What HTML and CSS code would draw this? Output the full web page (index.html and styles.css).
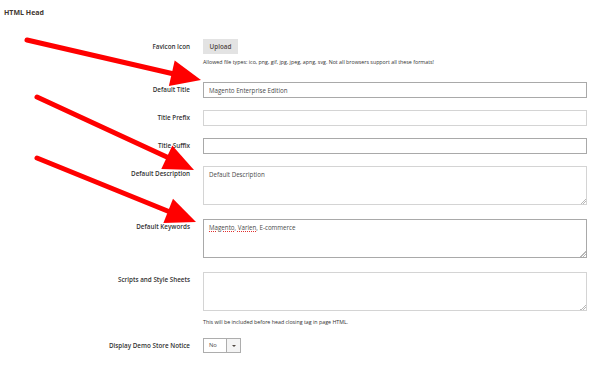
FILE: index.html
```html
<!DOCTYPE html>
<html lang="en">
<head>
    <meta charset="UTF-8">
    <title>HTML Head</title>
    <link rel="stylesheet" href="styles.css">
</head>
<body>

    <div class="page">
        <h2 class="section-title">HTML Head</h2>

        <div class="form">
            <div class="field field-favicon">
                <label class="field-label">Favicon Icon</label>
                <div class="field-control">
                    <button type="button" class="btn-upload">Upload</button>
                </div>
            </div>
            <div class="field-note note-favicon">
                <span></span>
                <p>Allowed file types: ico, png, gif, jpg, jpeg, apng, svg. Not all browsers support all these formats!</p>
            </div>

            <div class="field">
                <label class="field-label" for="default-title">Default Title</label>
                <div class="field-control">
                    <input type="text" id="default-title" class="input dark" value="Magento Enterprise Edition">
                </div>
            </div>
            <div class="field">
                <label class="field-label" for="title-prefix">Title Prefix</label>
                <div class="field-control">
                    <input type="text" id="title-prefix" class="input light">
                </div>
            </div>
            <div class="field">
                <label class="field-label" for="title-suffix">Title Suffix</label>
                <div class="field-control">
                    <input type="text" id="title-suffix" class="input dark">
                </div>
            </div>
            <div class="field field-area">
                <label class="field-label" for="default-description">Default Description</label>
                <div class="field-control">
                    <textarea id="default-description" class="area light">Default Description</textarea>
                </div>
            </div>
            <div class="field field-area">
                <label class="field-label">Default Keywords</label>
                <div class="field-control">
                    <div class="area dark"><span class="typo">Magento</span>, <span class="typo">Varien</span>, E-commerce</div>
                </div>
            </div>
            <div class="field field-area field-scripts">
                <label class="field-label" for="scripts">Scripts and Style Sheets</label>
                <div class="field-control">
                    <textarea id="scripts" class="area light"></textarea>
                </div>
            </div>
            <div class="field-note note-scripts">
                <span></span>
                <p>This will be included before head closing tag in page HTML.</p>
            </div>
            <div class="field">
                <label class="field-label">Display Demo Store Notice</label>
                <div class="field-control">
                    <div class="select">
                        <span class="select-value">No</span>
                        <span class="select-arrow"></span>
                    </div>
                </div>
            </div>
        </div>
    </div>

    <svg class="arrows" width="603" height="366" viewBox="0 0 603 366">
        <g stroke="#ff0000" stroke-width="5" stroke-linecap="round" fill="none">
            <line x1="27" y1="40" x2="174" y2="74"/>
            <line x1="37" y1="97" x2="169" y2="158"/>
            <line x1="37" y1="158" x2="170" y2="212"/>
        </g>
        <g fill="#ff0000">
            <polygon points="201,80 168.9,86 174.7,60.6"/>
            <polygon points="194,170 161.3,169.1 172.3,145.5"/>
            <polygon points="196,222 163.4,222.9 173,198.7"/>
        </g>
    </svg>

</body>
</html>
```

FILE: styles.css
```css
* {
    box-sizing: border-box;
}
body {
    margin: 0;
    background: #ffffff;
    font-family: "Open Sans", "Noto Sans", Arial, sans-serif;
    color: #303030;
}
.page {
    position: relative;
    padding: 9px 4px 0;
}
.section-title {
    margin: 0;
    font-size: 7px;
    line-height: 8px;
    font-weight: 700;
    color: #41362f;
}
.form {
    margin-top: 22px;
}
.field {
    display: grid;
    grid-template-columns: 186px 384px;
    column-gap: 13px;
    align-items: center;
    margin-bottom: 12px;
}
.field-label {
    text-align: right;
    font-size: 6.3px;
    line-height: 8px;
    font-weight: 600;
    color: #333333;
}
.field-area {
    align-items: start;
    margin-bottom: 14px;
}
.field-area .field-label {
    padding-top: 4px;
}
.field-favicon {
    margin-bottom: 0;
}
.btn-upload {
    display: block;
    width: 35px;
    height: 15px;
    padding: 0;
    border: 0;
    background: #e3e3e3;
    font-family: inherit;
    font-size: 6.3px;
    font-weight: 600;
    color: #514943;
}
.field-note {
    display: grid;
    grid-template-columns: 186px 384px;
    column-gap: 13px;
}
.field-note p {
    margin: 0;
    font-size: 5.3px;
    line-height: 6px;
    color: #303030;
    white-space: nowrap;
}
.note-favicon {
    margin-top: 5px;
    margin-bottom: 17px;
}
.field-scripts {
    margin-bottom: 8px;
}
.note-scripts {
    margin-bottom: 13px;
}
.input {
    display: block;
    width: 384px;
    height: 16px;
    padding: 0 5px;
    border: 1px solid #adadad;
    font-family: inherit;
    font-size: 6.2px;
    color: #4a4a4a;
    outline: none;
}
.area {
    display: block;
    width: 384px;
    height: 39px;
    padding: 4px 5px;
    border: 1px solid #adadad;
    font-family: inherit;
    font-size: 6.2px;
    line-height: 8px;
    color: #4a4a4a;
    resize: both;
    overflow: auto;
    outline: none;
}
.area::-webkit-resizer {
    background: linear-gradient(135deg, transparent 80%, #b8b8b8 80%, #b8b8b8 84%, transparent 84%, transparent 89%, #b8b8b8 89%, #b8b8b8 93%, transparent 93%);
}
.dark {
    border-color: #a9a9a9;
}
.light {
    border-color: #d4d4d4;
}
.typo {
    text-decoration: underline dotted #e03030;
    text-decoration-thickness: 1px;
    text-underline-offset: 1px;
}
.select {
    display: flex;
    width: 38px;
    height: 15px;
    border: 1px solid #adadad;
    font-size: 5.8px;
    color: #4a4a4a;
}
.select-value {
    width: 23px;
    padding-left: 5px;
    line-height: 13px;
    border-right: 1px solid #adadad;
}
.select-arrow {
    flex: 1;
    position: relative;
    background: #f4f4f4;
}
.select-arrow::after {
    content: "";
    position: absolute;
    left: 5px;
    top: 6px;
    border-left: 2px solid transparent;
    border-right: 2px solid transparent;
    border-top: 2px solid #514943;
}
.arrows {
    position: absolute;
    top: 0;
    left: 0;
    pointer-events: none;
}
```
